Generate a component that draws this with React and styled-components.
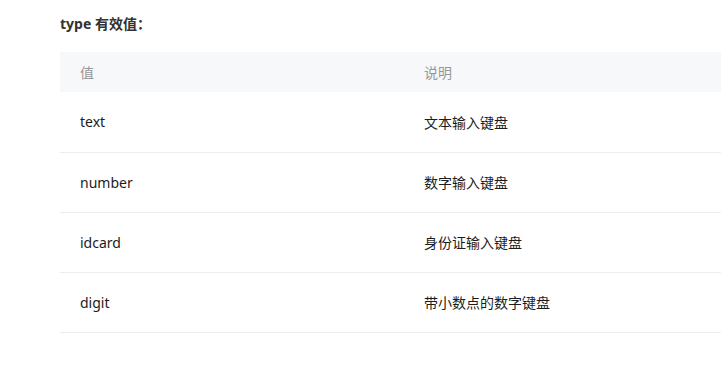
import React from "react";
import styled, { createGlobalStyle } from "styled-components";

const GlobalStyle = createGlobalStyle`
  html, body {
    margin: 0;
    padding: 0;
    background: #fff;
    overflow: hidden;
  }
  body {
    font-family: "Noto Sans", "Noto Sans CJK SC", sans-serif;
    color: #333;
  }
`;

const rows = [
  { value: "text", desc: "文本输入键盘" },
  { value: "number", desc: "数字输入键盘" },
  { value: "idcard", desc: "身份证输入键盘" },
  { value: "digit", desc: "带小数点的数字键盘" },
];

export default function App() {
  return (
    <>
      <GlobalStyle />
      <Page>
        <Title>type 有效值：</Title>
        <Table>
          <colgroup>
            <Col $w="344px" />
            <Col />
          </colgroup>
          <thead>
            <tr>
              <HeadCell>值</HeadCell>
              <HeadCell>说明</HeadCell>
            </tr>
          </thead>
          <tbody>
            {rows.map((r) => (
              <tr key={r.value}>
                <Cell>{r.value}</Cell>
                <Cell>{r.desc}</Cell>
              </tr>
            ))}
          </tbody>
        </Table>
      </Page>
    </>
  );
}

const Page = styled.div`
  padding: 14px 0 0 60px;
`;

const Title = styled.h3`
  margin: 0 0 18px;
  font-size: 14px;
  line-height: 20px;
  font-weight: 700;
  color: #323233;
`;

const Table = styled.table`
  width: 661px;
  table-layout: fixed;
  border-collapse: collapse;
  border-spacing: 0;
  font-size: 14px;
`;

const Col = styled.col`
  width: ${(p) => p.$w || "auto"};
`;

const HeadCell = styled.th`
  height: 40px;
  padding: 0 20px;
  box-sizing: border-box;
  background: #f7f8fa;
  color: #969799;
  font-weight: 400;
  text-align: left;
`;

const Cell = styled.td`
  height: 60px;
  padding: 0 20px;
  box-sizing: border-box;
  border-bottom: 1px solid #ebedf0;
  color: #1c1c1c;
  font-size: 14px;
  text-align: left;
`;
